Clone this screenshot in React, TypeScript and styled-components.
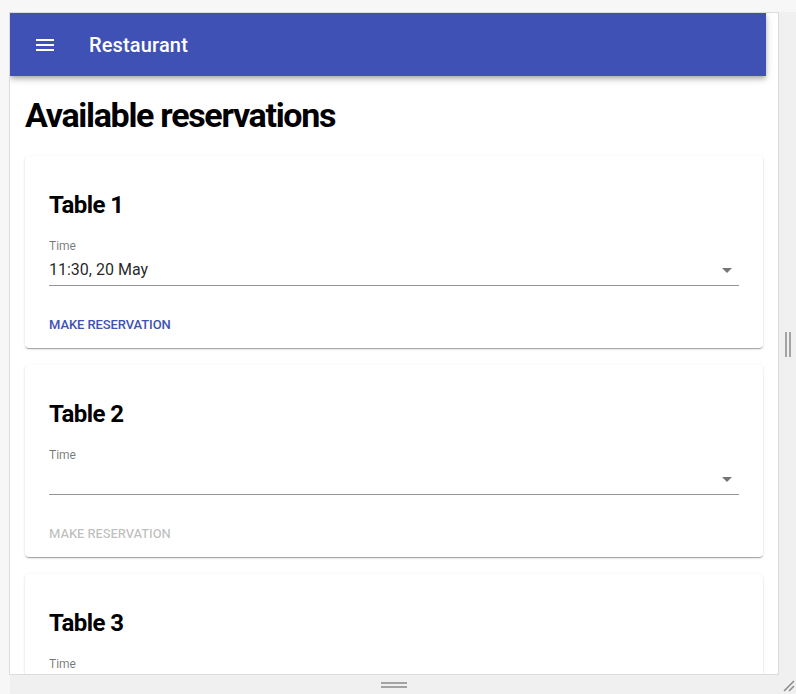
import React from "react";
import styled, { createGlobalStyle } from "styled-components";

const Global = createGlobalStyle`
  html, body { margin: 0; padding: 0; }
  body {
    background: #f7f7f7;
    font-family: Roboto, "Liberation Sans", Arial, sans-serif;
    -webkit-font-smoothing: antialiased;
  }
  * { box-sizing: border-box; }
`;

const Stage = styled.div`
  width: 796px;
  height: 694px;
  padding: 12px 0 0 9px;
  overflow: hidden;
`;

const Resizer = styled.div`
  display: grid;
  grid-template-columns: 770px 17px;
  grid-template-rows: 663px 19px;
`;

const Frame = styled.div`
  border: 1px solid #dcdcdc;
  background: #fff;
  overflow: hidden;
  display: flex;
  flex-direction: column;
`;

const SideStrip = styled.div`
  background: #f0f0f0;
  display: flex;
  align-items: center;
  padding-left: 6px;
`;

const VGrip = styled.div`
  width: 6px;
  height: 25px;
  border-left: 2px solid #a3a3a3;
  border-right: 2px solid #a3a3a3;
  margin-top: 1px;
`;

const BottomStrip = styled.div`
  background: #f0f0f0;
  margin-left: 1px;
  display: flex;
  justify-content: center;
  align-items: center;
`;

const HGrip = styled.div`
  width: 26px;
  height: 6px;
  border-top: 2px solid #a3a3a3;
  border-bottom: 2px solid #a3a3a3;
  margin-top: 1px;
  margin-left: -1px;
`;

const Corner = styled.div`
  background: #f0f0f0;
  display: flex;
  align-items: flex-end;
  justify-content: flex-end;
  padding: 0 1px 2px 0;
`;

const AppBar = styled.header`
  position: relative;
  z-index: 2;
  width: 756px;
  height: 63px;
  flex: none;
  background: #3f51b5;
  color: #fff;
  display: flex;
  align-items: center;
  padding-left: 23px;
  box-shadow: 0px 2px 4px -1px rgba(0, 0, 0, 0.2), 0px 4px 5px 0px rgba(0, 0, 0, 0.14),
    0px 1px 10px 0px rgba(0, 0, 0, 0.12);
`;

const MenuIcon = styled.svg`
  width: 24px;
  height: 24px;
  fill: #fff;
  flex: none;
`;

const Title = styled.h1`
  margin: 0 0 0 32px;
  font-size: 20px;
  font-weight: 500;
  line-height: 32px;
  letter-spacing: 0.15px;
`;

const Content = styled.main`
  padding: 18px 15px 0;
  display: flex;
  flex-direction: column;
`;

const PageHeading = styled.h2`
  margin: 0 0 20px;
  font-size: 34px;
  font-weight: 700;
  line-height: 42px;
  color: #000;
  letter-spacing: -1.3px;
`;

const Card = styled.section`
  flex: none;
  background: #fff;
  border-radius: 4px;
  padding: 33px 24px 5px;
  margin-bottom: 17px;
  box-shadow: 0px 2px 1px -1px rgba(0, 0, 0, 0.2), 0px 1px 1px 0px rgba(0, 0, 0, 0.14),
    0px 1px 3px 0px rgba(0, 0, 0, 0.12);
  display: flex;
  flex-direction: column;
  align-items: flex-start;
`;

const CardTitle = styled.h3`
  margin: 0 0 17px;
  font-size: 24px;
  font-weight: 700;
  line-height: 32px;
  color: #000;
  letter-spacing: -0.6px;
`;

const Field = styled.div`
  align-self: stretch;
  display: flex;
  flex-direction: column;
`;

const FieldLabel = styled.label`
  font-size: 12px;
  line-height: 16px;
  color: rgba(0, 0, 0, 0.54);
`;

const SelectBox = styled.div`
  position: relative;
  padding: 6px 24px 6px 0;
  border-bottom: 1px solid rgba(0, 0, 0, 0.42);
  font-size: 16px;
  line-height: 19px;
  height: 32px;
  color: rgba(0, 0, 0, 0.87);
`;

const ArrowIcon = styled.svg`
  position: absolute;
  right: 0;
  top: 4px;
  width: 24px;
  height: 24px;
  fill: rgba(0, 0, 0, 0.54);
`;

const ActionButton = styled.button<{ $disabled?: boolean }>`
  margin: 21px 0 0 -8px;
  padding: 6px 8px;
  border: 0;
  background: transparent;
  font-family: inherit;
  font-size: 13px;
  font-weight: 500;
  line-height: 24px;
  letter-spacing: -0.1px;
  text-transform: uppercase;
  color: ${(p) => (p.$disabled ? "rgba(0, 0, 0, 0.26)" : "#3f51b5")};
  cursor: ${(p) => (p.$disabled ? "default" : "pointer")};
`;

type Table = { name: string; time: string };

const tables: Table[] = [
  { name: "Table 1", time: "11:30, 20 May" },
  { name: "Table 2", time: "" },
  { name: "Table 3", time: "" },
];

function TableCard({ table }: { table: Table }) {
  const empty = !table.time;
  return (
    <Card>
      <CardTitle>{table.name}</CardTitle>
      <Field>
        <FieldLabel>Time</FieldLabel>
        <SelectBox>
          {table.time || "\u200b"}
          <ArrowIcon viewBox="0 0 24 24">
            <path d="M7 10l5 5 5-5z" />
          </ArrowIcon>
        </SelectBox>
      </Field>
      <ActionButton $disabled={empty} disabled={empty}>
        Make reservation
      </ActionButton>
    </Card>
  );
}

export default function App() {
  return (
    <>
      <Global />
      <Stage>
        <Resizer>
          <Frame>
            <AppBar>
              <MenuIcon viewBox="0 0 24 24">
                <path d="M3 18h18v-2H3v2zm0-5h18v-2H3v2zm0-7v2h18V6H3z" />
              </MenuIcon>
              <Title>Restaurant</Title>
            </AppBar>
            <Content>
              <PageHeading>Available reservations</PageHeading>
              {tables.map((t) => (
                <TableCard key={t.name} table={t} />
              ))}
            </Content>
          </Frame>
          <SideStrip>
            <VGrip />
          </SideStrip>
          <BottomStrip>
            <HGrip />
          </BottomStrip>
          <Corner>
            <svg width="14" height="14" viewBox="0 0 14 14">
              <path d="M13 3L3 13M13 8L8 13" stroke="#8a8a8a" strokeWidth="1.5" fill="none" />
            </svg>
          </Corner>
        </Resizer>
      </Stage>
    </>
  );
}
